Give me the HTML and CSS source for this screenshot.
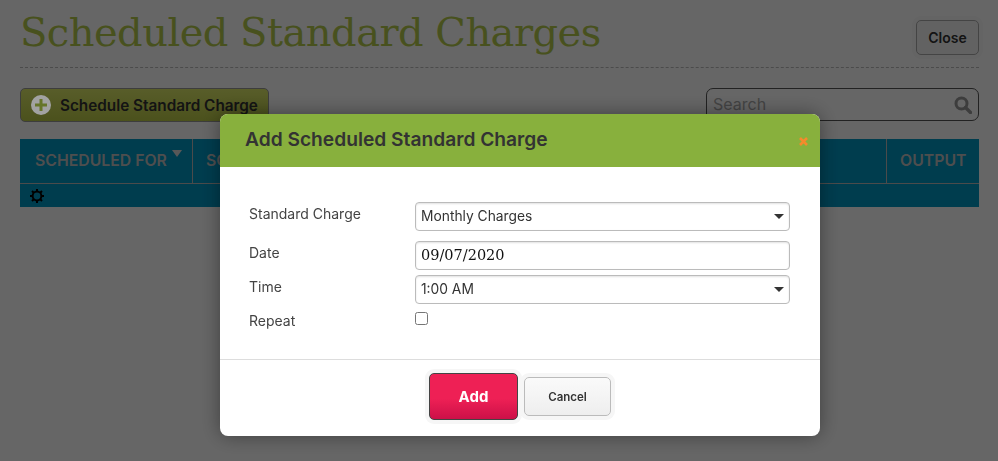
FILE: index.html
```html
<!DOCTYPE html>
<html lang="en">
  <head>
    <meta charset="UTF-8" />
    <meta name="viewport" content="width=device-width, initial-scale=1.0" />
    <title>Scheduled Standard Charges</title>
    <link rel="stylesheet" href="styles.css">
  </head>
  <body>
    <div class="page-head">
      <h1>Scheduled Standard Charges</h1>
      <button class="close-btn">Close</button>
    </div>

    <div class="toolbar">
      <button class="schedule-btn">
        <svg class="plus-icon" width="20" height="20" viewBox="0 0 20 20">
          <circle cx="10" cy="10" r="10" fill="#a2a2a2" />
          <path d="M10 4v12M4 10h12" stroke="#66752a" stroke-width="3" />
        </svg>
        Schedule Standard Charge
      </button>
      <div class="search">
        <span class="search-text">Search</span>
        <svg width="18" height="18" viewBox="0 0 18 18">
          <circle cx="7.5" cy="7.5" r="5.5" fill="none" stroke="#999" stroke-width="3" />
          <path d="M11.5 11.5l5 5" stroke="#999" stroke-width="3.4" stroke-linecap="round" />
        </svg>
      </div>
    </div>

    <div class="table">
      <div class="table-head">
        <div class="col col-for">SCHEDULED FOR<span class="sort"></span></div>
        <div class="col col-mid">SCHEDULED</div>
        <div class="col col-output">OUTPUT</div>
      </div>
      <div class="table-row">
        <svg width="14" height="14" viewBox="0 0 14 14">
          <circle cx="7" cy="7" r="4.4" fill="none" stroke="#000" stroke-width="2" />
          <path d="M7 0v3M7 11v3M0 7h3M11 7h3M2 2l2 2M10 10l2 2M12 2l-2 2M4 10l-2 2" stroke="#000" stroke-width="2" />
        </svg>
      </div>
    </div>

    <div class="overlay">
      <div class="dialog">
        <div class="dialog-head">
          <h2>Add Scheduled Standard Charge</h2>
          <svg class="dialog-x" width="9" height="9" viewBox="0 0 9 9">
            <path d="M1 1l7 7M8 1l-7 7" stroke="#f58a2c" stroke-width="2.6" />
          </svg>
        </div>
        <div class="dialog-body">
          <div class="field field-charge">
            <label>Standard Charge</label>
            <div class="control select">Monthly Charges</div>
          </div>
          <div class="field field-date">
            <label>Date</label>
            <div class="control date">09/07/2020</div>
          </div>
          <div class="field field-time">
            <label>Time</label>
            <div class="control select">1:00 AM</div>
          </div>
          <div class="field field-repeat">
            <label>Repeat</label>
            <input type="checkbox" class="check" />
          </div>
        </div>
        <div class="dialog-foot">
          <button class="add-btn">Add</button>
          <button class="cancel-btn">Cancel</button>
        </div>
      </div>
    </div>
  </body>
</html>
```

FILE: styles.css
```css
body {
  font-family: "Inter", "Open Sans", sans-serif;
  background-color: #fff;
  color: #333;
  margin: 0;
  padding: 0 19px 0 20px;
  height: 461px;
  overflow: hidden;
}

button {
  font-family: inherit;
  cursor: pointer;
}

.page-head {
  display: flex;
  justify-content: space-between;
  height: 67px;
  border-bottom: 1px dashed #bbb;
}

h1 {
  margin: 7px 0 0;
  font-family: "DejaVu Serif", serif;
  font-weight: 400;
  font-size: 40px;
  line-height: 50px;
  letter-spacing: -0.53px;
  color: #b4cb4c;
  white-space: nowrap;
}

.close-btn {
  margin-top: 20px;
  width: 63px;
  height: 35px;
  background-color: #f6f6f6;
  border: 1px solid #aaa;
  border-radius: 5px;
  box-shadow: 0 0 0 4px #fafafa;
  color: #333;
  font-size: 14px;
  font-weight: 600;
}

.toolbar {
  display: flex;
  justify-content: space-between;
  margin-top: 20px;
  height: 34px;
}

.schedule-btn {
  display: flex;
  align-items: center;
  gap: 9px;
  width: 249px;
  height: 34px;
  padding: 0 0 0 10px;
  background: linear-gradient(#dce868, #bccb48);
  border: 1px solid #999;
  border-radius: 5px;
  color: #333;
  font-size: 15.3px;
  font-weight: 600;
  white-space: nowrap;
}

.plus-icon {
  position: relative;
  z-index: 2;
}

.search {
  display: flex;
  align-items: center;
  justify-content: space-between;
  box-sizing: border-box;
  width: 273px;
  height: 33px;
  padding: 0 6px;
  border: 1px solid #555;
  border-radius: 7px;
}

.search-text {
  margin-bottom: 2px;
  color: #aaa;
  font-size: 16px;
}

.table {
  margin-top: 17px;
  background-color: #0098c4;
}

.table-head {
  display: flex;
  height: 44px;
  border-bottom: 1px solid #bbb;
  color: #c4c4c4;
  font-size: 15.8px;
  font-weight: 600;
}

.col {
  box-sizing: border-box;
  padding: 12px 13px 0;
  white-space: nowrap;
}

.col-for {
  position: relative;
  width: 173px;
  padding-left: 15px;
  border-right: 1px solid #bbb;
}

.col-mid {
  flex: 1;
}

.col-output {
  width: 93px;
  border-left: 1px solid #bbb;
}

.sort {
  position: absolute;
  top: 11px;
  left: 152px;
  border-style: solid;
  border-width: 7px 5px 0;
  border-color: #ddd transparent transparent;
}

.table-row {
  display: flex;
  align-items: center;
  height: 23px;
  padding-left: 10px;
}

.overlay {
  position: fixed;
  inset: 0;
  background-color: rgba(0, 0, 0, 0.6);
}

.dialog {
  width: 600px;
  height: 322px;
  margin: 114px 0 0 220px;
  background-color: #fff;
  border-radius: 8px;
  overflow: hidden;
  box-shadow: 0 0 20px rgba(0, 0, 0, 0.4);
}

.dialog-head {
  display: flex;
  align-items: center;
  justify-content: space-between;
  height: 53px;
  padding: 0 12px 0 25px;
  background-color: #88b03d;
}

.dialog-head h2 {
  margin: 0 0 4px;
  font-size: 19.2px;
  font-weight: 600;
  color: #333;
}

.dialog-x {
  margin-top: 2px;
}

.dialog-body {
  height: 193px;
  box-sizing: border-box;
  padding: 35px 30px 0 29px;
  border-bottom: 1px solid #ddd;
}

.field {
  display: flex;
}

.field label {
  width: 166px;
  flex-shrink: 0;
  margin-top: 1px;
  font-size: 14px;
  line-height: 22px;
  color: #444;
}

.field-date {
  margin-top: 10px;
}

.field-time {
  margin-top: 5px;
}

.field-repeat {
  margin-top: 5px;
}

.control {
  position: relative;
  box-sizing: border-box;
  width: 375px;
  height: 29px;
  padding-left: 5px;
  border: 1px solid #bbb;
  border-radius: 4px;
  box-shadow: inset 0 1px 2px rgba(0, 0, 0, 0.12);
  font-size: 13.8px;
  line-height: 26px;
  color: #333;
}

.select::after {
  content: "";
  position: absolute;
  top: 11px;
  right: 5px;
  border-style: solid;
  border-width: 5px 5px 0;
  border-color: #333 transparent transparent;
}

.control.date {
  font-family: "DejaVu Serif", serif;
  font-size: 14.5px;
  line-height: 27px;
  color: #111;
}

.check {
  width: 13px;
  height: 13px;
  margin: 3px 0 0;
}

.dialog-foot {
  display: flex;
  justify-content: center;
  align-items: center;
  gap: 6px;
  height: 73px;
}

.add-btn {
  width: 89px;
  height: 47px;
  background: linear-gradient(#ee2055 55%, #cc1048);
  border: 1px solid #444;
  border-radius: 5px;
  box-shadow: 0 0 0 4px #f6f6f6;
  color: #fff;
  font-size: 15px;
  font-weight: 700;
}

.cancel-btn {
  width: 87px;
  height: 39px;
  background: linear-gradient(#fafafa, #eee);
  border: 1px solid #bbb;
  border-radius: 5px;
  box-shadow: 0 0 0 4px #f6f6f6;
  color: #333;
  font-size: 11.5px;
  font-weight: 600;
}
```
